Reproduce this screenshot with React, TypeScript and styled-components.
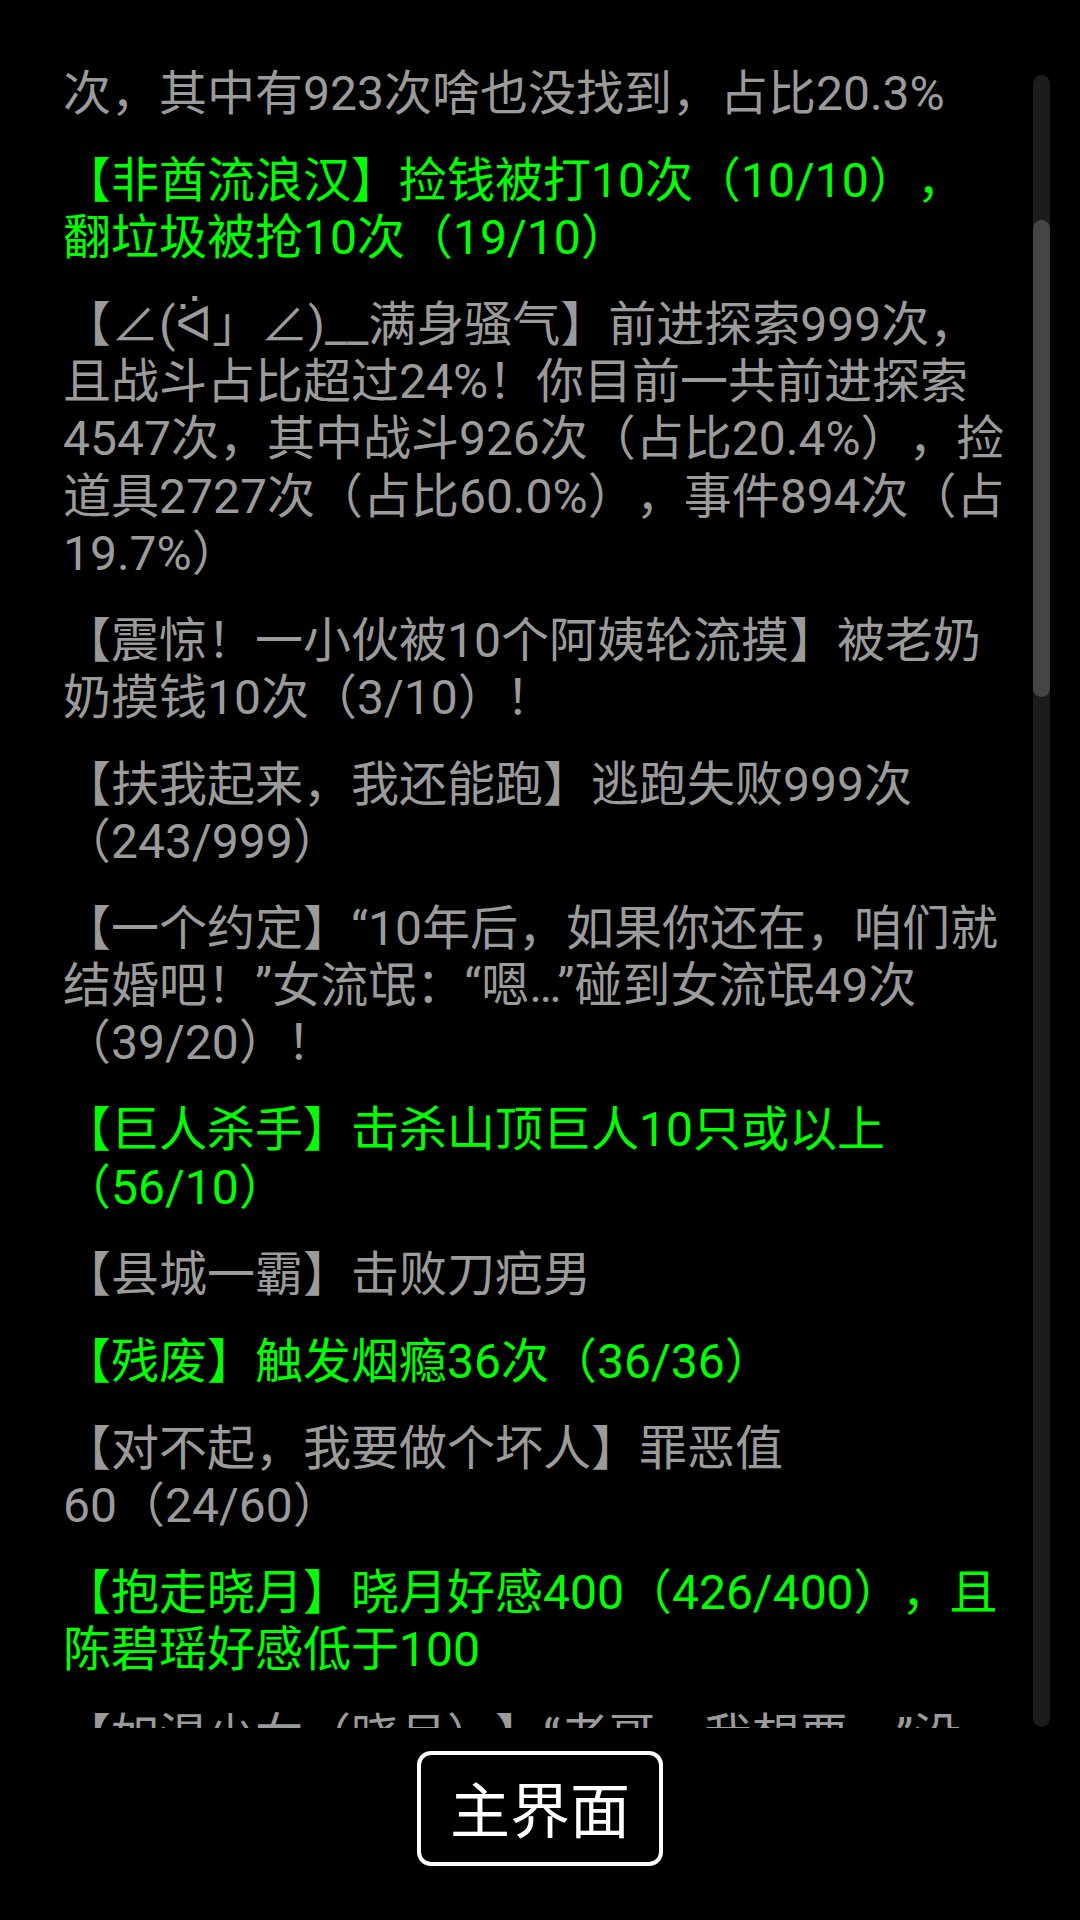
import styled, { createGlobalStyle } from "styled-components";

const GlobalStyle = createGlobalStyle`
  html, body {
    margin: 0;
    padding: 0;
    background: #000;
  }
  #root {
    width: 1080px;
    height: 1920px;
  }
`;

const Screen = styled.div`
  width: 1080px;
  height: 1920px;
  box-sizing: border-box;
  padding-top: 60px;
  display: flex;
  flex-direction: column;
  background: #000;
  overflow: hidden;
`;

const Panel = styled.div`
  height: 1668px;
  display: flex;
  flex-direction: row;
`;

const Viewport = styled.div`
  flex: 1;
  overflow: hidden;
  box-sizing: border-box;
  padding: 5px 0 0 63px;
  display: flex;
  flex-direction: column;
  gap: 30px;
`;

const Entry = styled.div<{ $done: boolean }>`
  font-family: Roboto, "Noto Sans CJK SC", "DejaVu Sans", sans-serif;
  font-size: 48px;
  line-height: 57.1px;
  text-spacing-trim: space-all;
  color: ${(p) => (p.$done ? "#00ff00" : "#9b9b9b")};
`;

const Line = styled.div`
  white-space: nowrap;
`;

const Track = styled.div`
  width: 17px;
  margin: 15px 30px 1px 0;
  border-radius: 9px;
  background: #1c1c1c;
  display: flex;
  flex-direction: column;
`;

const Thumb = styled.div<{ $top: number; $size: number }>`
  margin-top: ${(p) => p.$top}px;
  height: ${(p) => p.$size}px;
  border-radius: 9px;
  background: #454545;
`;

const Footer = styled.div`
  flex: 1;
  display: flex;
  justify-content: center;
  align-items: flex-start;
  padding-top: 23px;
`;

const MainButton = styled.button`
  width: 246px;
  height: 115px;
  box-sizing: border-box;
  border: 4px solid #fff;
  border-radius: 14px;
  background: #000;
  color: #fff;
  font-family: "Noto Sans CJK SC", sans-serif;
  font-size: 60px;
  line-height: 1;
  padding: 0 0 4px;
  display: flex;
  align-items: center;
  justify-content: center;
  cursor: pointer;
`;

type Achievement = { done: boolean; lines: string[] };

const achievements: Achievement[] = [
  { done: false, lines: ["次，其中有923次啥也没找到，占比20.3%"] },
  {
    done: true,
    lines: ["【非酋流浪汉】捡钱被打10次（10/10），", "翻垃圾被抢10次（19/10）"],
  },
  {
    done: false,
    lines: [
      "【∠(ᐛ」∠)__满身骚气】前进探索999次，",
      "且战斗占比超过24%！你目前一共前进探索",
      "4547次，其中战斗926次（占比20.4%），捡",
      "道具2727次（占比60.0%），事件894次（占",
      "19.7%）",
    ],
  },
  {
    done: false,
    lines: ["【震惊！一小伙被10个阿姨轮流摸】被老奶", "奶摸钱10次（3/10）！"],
  },
  { done: false, lines: ["【扶我起来，我还能跑】逃跑失败999次", "（243/999）"] },
  {
    done: false,
    lines: [
      "【一个约定】“10年后，如果你还在，咱们就",
      "结婚吧！”女流氓：“嗯…”碰到女流氓49次",
      "（39/20）！",
    ],
  },
  { done: true, lines: ["【巨人杀手】击杀山顶巨人10只或以上", "（56/10）"] },
  { done: false, lines: ["【县城一霸】击败刀疤男"] },
  { done: true, lines: ["【残废】触发烟瘾36次（36/36）"] },
  { done: false, lines: ["【对不起，我要做个坏人】罪恶值", "60（24/60）"] },
  {
    done: true,
    lines: ["【抱走晓月】晓月好感400（426/400），且", "陈碧瑶好感低于100"],
  },
  { done: false, lines: ["【如渴少女（晓月）】“老哥，我想要。”没", "有……"] },
];

export default function App() {
  return (
    <>
      <GlobalStyle />
      <Screen>
        <Panel>
          <Viewport>
            {achievements.map((a, i) => (
              <Entry key={i} $done={a.done}>
                {a.lines.map((l, j) => (
                  <Line key={j}>{l}</Line>
                ))}
              </Entry>
            ))}
          </Viewport>
          <Track>
            <Thumb $top={145} $size={477} />
          </Track>
        </Panel>
        <Footer>
          <MainButton>主界面</MainButton>
        </Footer>
      </Screen>
    </>
  );
}
